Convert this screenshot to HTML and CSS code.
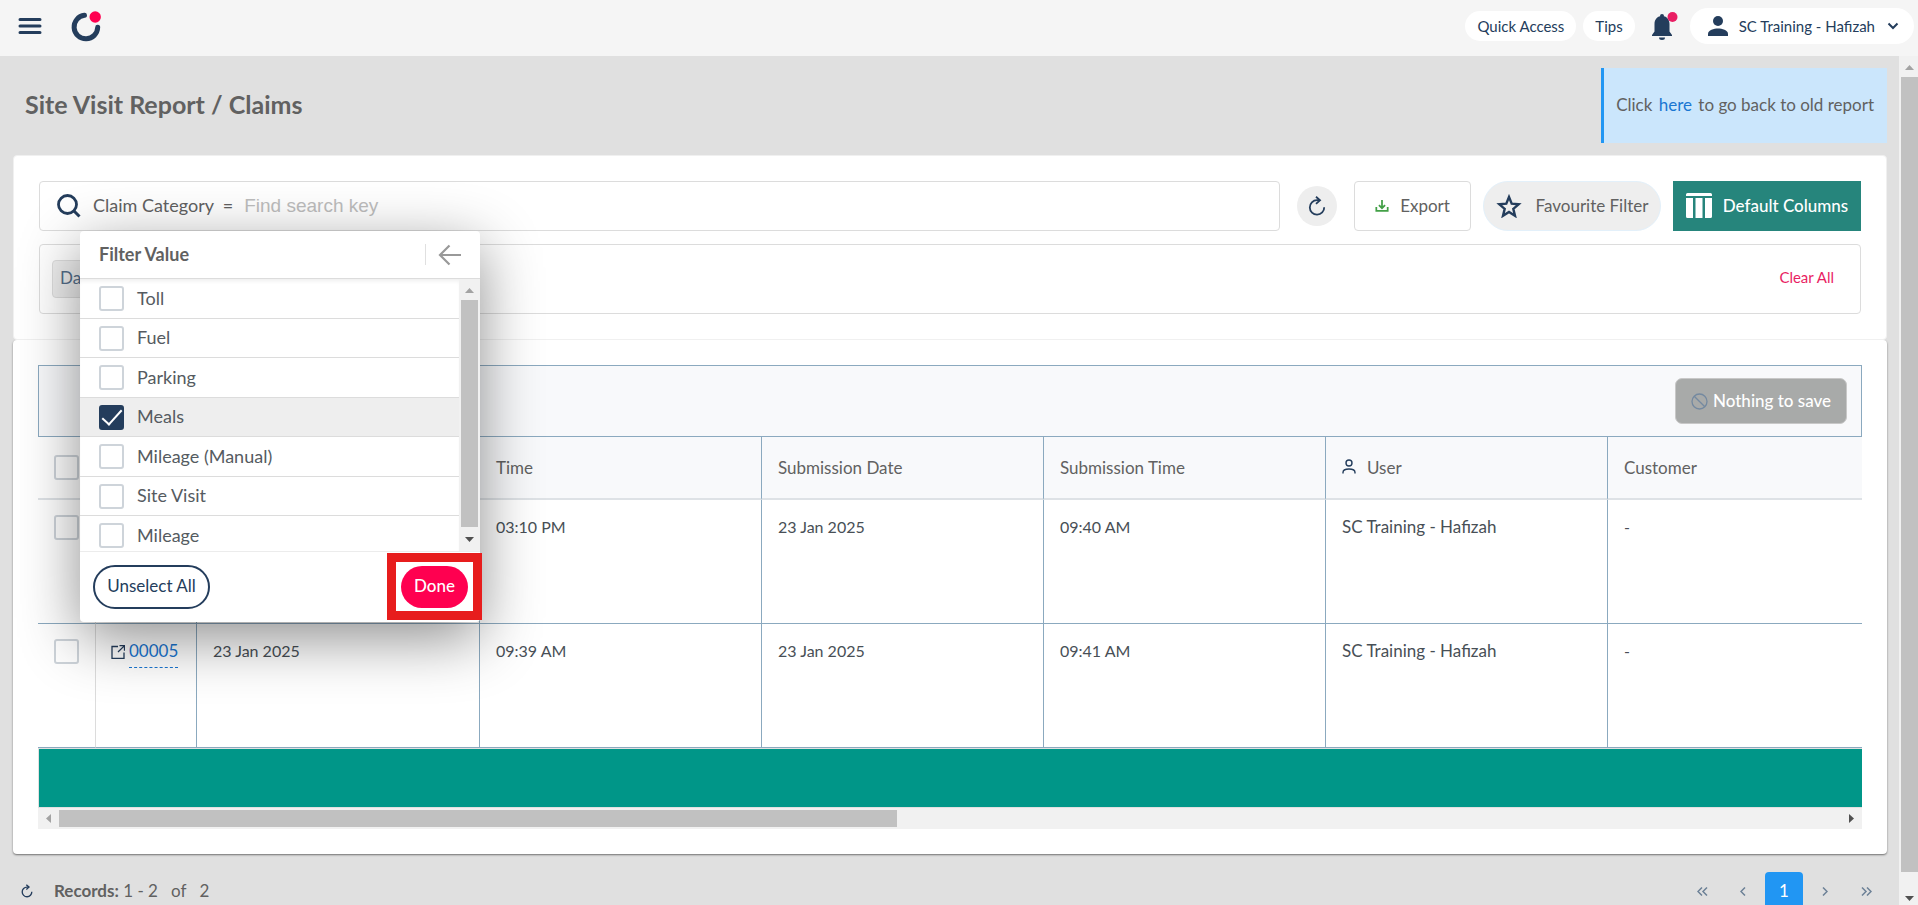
FILE: index.html
```html
<!DOCTYPE html>
<html lang="en">
<head>
<meta charset="utf-8">
<title>Site Visit Report / Claims</title>
<link rel="stylesheet" href="styles.css">
</head>
<body>
<header class="topbar">
  <button class="icon-btn" aria-label="Menu">
    <svg width="24" height="18" viewBox="0 0 24 18"><path d="M2 2.500h20M2 9h20M2 15.500h20" stroke="#243d5c" stroke-width="3" stroke-linecap="round"/></svg>
  </button>
  <a class="logo" href="#" aria-label="Home">
    <svg width="32" height="32" viewBox="0 0 32 32"><path d="M13.500 5.300A11.800 11.800 0 1 0 26.700 17.300" fill="none" stroke="#243d5c" stroke-width="5" stroke-linecap="round"/><circle cx="24.200" cy="7" r="5.700" fill="#ff0050"/></svg>
  </a>
  <nav class="topnav">
    <button class="pill">Quick Access</button>
    <button class="pill">Tips</button>
    <button class="icon-btn bell" aria-label="Notifications">
      <svg width="28" height="30" viewBox="0 0 28 30"><path d="M11 5c4.500 0 7.500 3.500 7.500 8v7.500L21 24v1H1v-1l2.500-3.500V13C3.500 8.500 6.500 5 11 5Z" fill="#243d5c"/><circle cx="11" cy="5" r="2" fill="#243d5c"/><path d="M8 26.500h6a3 2.500 0 0 1-6 0Z" fill="#243d5c"/><circle cx="21.500" cy="6" r="5" fill="#e91e63"/></svg>
    </button>
    <button class="pill user-pill">
      <svg width="22" height="22" viewBox="0 0 22 22" fill="#243d5c"><circle cx="11" cy="6" r="5"/><path d="M1 21v-2c0-4 6-5.500 10-5.500S21 15 21 19v2Z"/></svg>
      <span>SC Training - Hafizah</span>
      <svg class="caret" width="12" height="8" viewBox="0 0 12 8"><path d="M1.500 1.500 6 6l4.500-4.500" fill="none" stroke="#243d5c" stroke-width="2"/></svg>
    </button>
  </nav>
</header>

<div class="viewport">
  <main class="page">
    <div class="page-head">
      <h1>Site Visit Report / Claims</h1>
      <p class="note">Click <a href="#">here</a> to go back to old report</p>
    </div>

    <section class="card filters">
      <div class="filter-row">
        <div class="search">
          <svg width="24" height="24" viewBox="0 0 24 24"><circle cx="10.500" cy="10.500" r="9" fill="none" stroke="#243d5c" stroke-width="2.800"/><path d="m17 17 5.500 5.500" stroke="#243d5c" stroke-width="3"/></svg>
          <label for="search-key">Claim Category&nbsp; =</label>
          <input id="search-key" type="text" placeholder="Find search key">
        </div>
        <button class="round" aria-label="Refresh">
          <svg width="18" height="20" viewBox="0 0 18 20" fill="none" stroke="#243d5c" stroke-width="1.800"><path d="M11.500 4.200H9a7.200 7.200 0 1 0 7.200 7"/><path d="m8 .8 4 3.400-4 3.600"/></svg>
        </button>
        <button class="export">
          <svg width="14" height="14" viewBox="0 0 16 16" fill="none" stroke="#43a047" stroke-width="2"><path d="M8 1v9M4.500 7 8 10.500 11.500 7M1.500 9v4.500h13V9"/></svg>
          Export
        </button>
        <button class="favourite">
          <svg width="26" height="24" viewBox="0 0 26 24"><path d="m13 3 2.700 6.700 7 .6-5.400 4.600 1.700 6.900-6-3.800-6 3.800 1.700-6.900L3.300 10.300l7-.6Z" fill="none" stroke="#243d5c" stroke-width="2.400"/></svg>
          Favourite Filter
        </button>
        <button class="columns">
          <svg width="26" height="26" viewBox="0 0 26 26" fill="#fff"><path d="M0 1.500Q0 0 1.500 0h23Q26 0 26 1.500V3H0ZM0 5h7v20H1.500Q0 25 0 23.500ZM9.500 5h7v20h-7ZM19 5h7v18.500q0 1.500-1.500 1.500H19Z"/></svg>
          Default Columns
        </button>
      </div>
      <div class="chips">
        <span class="chip">Date</span>
        <button class="clear">Clear All</button>
      </div>

      <div class="popup">
        <div class="popup-head">
          <h2>Filter Value</h2>
          <button class="back" aria-label="Back">
            <svg width="24" height="22" viewBox="0 0 24 22" fill="none" stroke="#999" stroke-width="2.200"><path d="M23 11H2M11.500 1.500 2 11l9.500 9.500"/></svg>
          </button>
        </div>
        <div class="popup-body">
          <div class="options">
            <label><input type="checkbox"><span>Toll</span></label>
            <label><input type="checkbox"><span>Fuel</span></label>
            <label><input type="checkbox"><span>Parking</span></label>
            <label class="selected"><input type="checkbox" checked><span>Meals</span></label>
            <label><input type="checkbox"><span>Mileage (Manual)</span></label>
            <label><input type="checkbox"><span>Site Visit</span></label>
            <label><input type="checkbox"><span>Mileage</span></label>
          </div>
          <div class="vbar">
            <svg width="9" height="5" viewBox="0 0 9 5"><path d="M0 5 4.500 0 9 5Z" fill="#a3a3a3"/></svg>
            <div class="thumb"></div>
            <svg width="9" height="5" viewBox="0 0 9 5"><path d="M0 0 4.500 5 9 0Z" fill="#505050"/></svg>
          </div>
        </div>
        <div class="popup-foot">
          <button class="unselect">Unselect All</button>
          <div class="highlight"><button class="done">Done</button></div>
        </div>
      </div>
    </section>

    <section class="card report">
      <div class="toolbar">
        <button class="save" disabled>
          <svg width="17" height="17" viewBox="0 0 17 17" fill="none" stroke="#7489a0" stroke-width="1.300"><circle cx="8.500" cy="8.500" r="7.500"/><path d="m3.200 3.200 10.600 10.600"/></svg>
          Nothing to save
        </button>
      </div>
      <table>
        <colgroup><col class="c-check"><col class="c-id"><col class="c-date"><col class="c-data"><col class="c-data"><col class="c-data"><col class="c-data"><col></colgroup>
        <thead>
          <tr>
            <th><input type="checkbox" aria-label="Select all"></th><th></th><th></th>
            <th>Time</th><th>Submission Date</th><th>Submission Time</th>
            <th><svg class="person" width="14" height="15" viewBox="0 0 14 15" fill="none" stroke="#243d5c" stroke-width="1.400"><circle cx="7" cy="4" r="3"/><path d="M1 14.500v-1C1 11 3.500 10 7 10s6 1 6 3.500v1"/></svg>User</th>
            <th>Customer</th>
          </tr>
        </thead>
        <tbody>
          <tr>
            <td><input type="checkbox" aria-label="Select row"></td><td></td><td></td>
            <td>03:10 PM</td><td>23 Jan 2025</td><td>09:40 AM</td><td class="user">SC Training - Hafizah</td><td>-</td>
          </tr>
          <tr>
            <td><input type="checkbox" aria-label="Select row"></td>
            <td><svg class="ext" width="14" height="14" viewBox="0 0 14 14" fill="none" stroke="#243d5c" stroke-width="1.300"><path d="M7 1.500H1v12h12v-6M8.500.700h5v5M13.300.900 7 7"/></svg><a href="#">00005</a></td>
            <td>23 Jan 2025</td>
            <td>09:39 AM</td><td>23 Jan 2025</td><td>09:41 AM</td><td class="user">SC Training - Hafizah</td><td>-</td>
          </tr>
        </tbody>
      </table>
      <div class="totals"></div>
      <div class="hbar">
        <svg width="5" height="9" viewBox="0 0 5 9"><path d="M5 0 0 4.500 5 9Z" fill="#a3a3a3"/></svg>
        <div class="track"><div class="thumb"></div></div>
        <svg width="5" height="9" viewBox="0 0 5 9"><path d="M0 0 5 4.500 0 9Z" fill="#505050"/></svg>
      </div>
    </section>

    <footer class="pager">
      <button class="icon-btn" aria-label="Reload records">
        <svg width="12" height="14" viewBox="0 0 18 20" fill="none" stroke="#243d5c" stroke-width="2"><path d="M11.500 4.200H9a7.200 7.200 0 1 0 7.200 7"/><path d="m8 .8 4 3.400-4 3.600"/></svg>
      </button>
      <p class="records"><b>Records:</b> <span>1 - 2</span><span>of</span><span>2</span></p>
      <nav class="pages">
        <button aria-label="First page"><svg width="11" height="9" viewBox="0 0 11 9"><path d="M5 .5 1 4.500l4 4M10 .5 6 4.500l4 4"/></svg></button>
        <button aria-label="Previous page"><svg width="6" height="9" viewBox="0 0 6 9"><path d="M5 .5 1 4.500l4 4"/></svg></button>
        <button class="current">1</button>
        <button aria-label="Next page"><svg width="6" height="9" viewBox="0 0 6 9"><path d="m1 .5 4 4-4 4"/></svg></button>
        <button aria-label="Last page"><svg width="11" height="9" viewBox="0 0 11 9"><path d="m1 .5 4 4-4 4M6 .5l4 4-4 4"/></svg></button>
      </nav>
    </footer>
  </main>
  <div class="vbar page-bar">
    <svg width="9" height="5" viewBox="0 0 9 5"><path d="M0 5 4.500 0 9 5Z" fill="#a3a3a3"/></svg>
    <div class="thumb"></div>
    <svg width="9" height="5" viewBox="0 0 9 5"><path d="M0 0 4.500 5 9 0Z" fill="#505050"/></svg>
  </div>
</div>
</body>
</html>
```
FILE: styles.css
```css
* { box-sizing: border-box; }

body {
  margin: 0;
  height: 100vh;
  display: flex;
  flex-direction: column;
  overflow: hidden;
  background: #e0e0e0;
  color: #616161;
  font: 17px/24px Lato, "Noto Sans", sans-serif;
}

button { font: inherit; color: inherit; border: 0; background: none; padding: 0; cursor: pointer; white-space: nowrap; }
svg { flex: none; display: block; }
h1, h2, p { margin: 0; }

/* Top bar */
.topbar { flex: none; height: 56px; padding: 0 4px 4px 18px; display: flex; align-items: center; background: #f5f5f5; }
.logo { margin-left: 29px; }
.topnav { margin-left: auto; display: flex; align-items: center; gap: 7px; font-size: 15px; color: #243d5c; }
.pill { height: 30px; padding: 0 12px; border-radius: 18px; background: #fff; }
.bell { margin: 0 4px 0 9px; }
.user-pill { height: 36px; padding: 0 15px 0 17px; display: flex; align-items: center; }
.user-pill span { margin: 0 12px 0 10px; }

.viewport { flex: 1; min-height: 0; display: flex; }
.page { flex: 1; min-width: 0; padding: 12px 12px 0 13px; overflow: hidden; }

.page-head { height: 87px; padding-left: 12px; display: flex; justify-content: space-between; align-items: flex-start; }
h1 { font-size: 25px; line-height: 72px; font-weight: 700; }
.note { height: 75px; padding: 0 13px 0 12px; border-left: 3px solid #2196f3; background: #cbe6fc; line-height: 73px; }
.note a { margin: 0 2px; color: #1976d2; text-decoration: none; }

/* Filters */
.card { background: #fff; border-radius: 4px; }
.filters { position: relative; border: 1px solid #f0f0f0; padding: 25px; }
.filter-row { display: flex; align-items: center; height: 50px; }
.search { flex: 1; height: 50px; padding-left: 17px; display: flex; align-items: center; border: 1px solid #dcdcdc; border-radius: 4px; }
.search label { margin: 0 11px 0 12px; padding-bottom: 2px; white-space: nowrap; font-size: 18px; }
.search input { flex: 1; min-width: 0; border: 0; outline: 0; padding: 0; background: none; font: 19px "Liberation Sans", Arial, sans-serif; }
.search input::placeholder { color: #bdbdbd; }
.round { width: 40px; height: 40px; margin: 0 17px; border-radius: 20px; background: #eee; display: grid; place-items: center; }
.export, .favourite, .columns, .save { display: flex; align-items: center; justify-content: center; }
.export { width: 117px; height: 50px; gap: 11px; border: 1px solid #dcdcdc; border-radius: 4px; }
.favourite { width: 178px; height: 50px; margin: 0 12px; gap: 14px; border: 1px solid #e3f0fa; border-radius: 25px; background: #eee; }
.columns { width: 188px; height: 50px; gap: 11px; background: #26857c; color: #fff; font-weight: 500; }

.chips { height: 70px; margin-top: 13px; padding: 0 26px 0 12px; display: flex; align-items: center; justify-content: space-between; border: 1px solid #dcdcdc; border-radius: 4px; }
.chip { height: 38px; padding: 0 7px; border: 1px solid #ddd; border-radius: 4px; background: #eee; line-height: 34px; color: #546e8a; }
.clear { padding-bottom: 4px; color: #e91e63; font-size: 15px; }

/* Checkboxes */
input[type="checkbox"] { appearance: none; display: block; flex: none; width: 25px; height: 25px; margin: 0; border: 2px solid #ced4da; border-radius: 3px; background: none; }
input[type="checkbox"]:checked { border-color: #243d5c; background: #243d5c; display: grid; place-items: center; }
input[type="checkbox"]:checked::before { content: ""; width: 18px; height: 8px; margin-bottom: 5px; border: solid #fff; border-width: 0 0 2px 2px; transform: rotate(-48deg); }

/* Filter value popup */
.popup { position: absolute; z-index: 2; top: 75px; left: 66px; width: 400px; background: #fff; border-radius: 4px; box-shadow: 0 16px 60px rgba(0, 0, 0, .45); }
.popup-head { height: 48px; padding: 0 18px 0 19px; display: flex; align-items: center; justify-content: space-between; border-bottom: 1px solid #dcdcdc; }
h2 { padding-bottom: 2px; font-size: 18px; line-height: 44px; font-weight: 700; }
.back { height: 21px; padding-left: 12px; border-left: 1px solid #e0e0e0; display: flex; align-items: center; }
.popup-body { height: 272px; display: flex; overflow: hidden; }
.options { flex: 1; box-shadow: inset 0 4px 4px -2px #eee; }
.options label { height: 40px; padding: 0 19px; display: flex; align-items: center; gap: 13px; border-bottom: 1px solid #dcdcdc; color: #555b61; font-size: 18px; }
.options label:nth-child(even) { height: 39px; }
.options span { padding-bottom: 2px; }
.options .selected { background: #eee; }
.popup-foot { height: 71px; padding: 0 13px; display: flex; align-items: center; justify-content: space-between; border-top: 1px solid #ececec; }
.unselect { width: 117px; height: 44px; padding-bottom: 2px; border: 2px solid #243d5c; border-radius: 22px; color: #243d5c; }
.highlight { margin: -2px -15px 0 0; padding: 4px 5px 3px; border: 9px solid #e71d1d; }
.done { width: 67px; height: 42px; padding-bottom: 2px; border-radius: 21px; background: #ff0050; color: #fff; font-weight: 500; display: block; }

/* Scrollbars */
.vbar { width: 21px; padding: 9px 2px; display: flex; flex-direction: column; align-items: center; gap: 7px; background: #f1f1f1; }
.vbar .thumb { flex: 1; width: 17px; background: #c1c1c1; }
.popup .thumb { margin-bottom: 3px; }
.page-bar { width: 19px; padding: 9px 0 4px 2px; gap: 7px; }
.page-bar .thumb { margin-bottom: 17px; }
.hbar { height: 21px; padding: 0 8px; display: flex; align-items: center; gap: 8px; background: #f1f1f1; }
.hbar .track { flex: 1; height: 17px; }
.hbar .thumb { width: 47%; height: 17px; background: #c1c1c1; }

/* Report */
.report { padding: 25px; box-shadow: 0 1px 2px rgba(0, 0, 0, .5); }
.toolbar { height: 72px; padding: 0 14px 0 0; display: flex; align-items: center; justify-content: flex-end; border: 1px solid #8ba9bf; background: #f8f9fb; }
.save { width: 172px; height: 46px; gap: 5px; border: 1px solid #c8c8c8; border-radius: 7px; background: #a8aaa9; color: #fff; font-weight: 500; }

table { width: 100%; table-layout: fixed; border-collapse: separate; border-spacing: 0; }
.c-check { width: 58px; }
.c-id { width: 101px; }
.c-date { width: 283px; }
.c-data { width: 282px; }
th { height: 63px; padding: 0 16px; text-align: left; font-weight: 400; background: #f8f9fb; border-right: 1px solid #8ba9bf; border-bottom: 2px solid #dee2e6; }
td { height: 124px; padding: 15px 16px; vertical-align: top; color: #484f56; border-right: 1px solid #8ba9bf; border-bottom: 1px solid #8ba9bf; font-size: 16px; }
th:first-child { background: #fff; }
th:first-child, td:first-child { border-right-color: #dcdcdc; }
th:last-child, td:last-child { border-right: 0; }
.user, td a { font-size: 17px; }
.person { display: inline-block; margin-right: 11px; }
.ext { display: inline-block; margin: 0 4px 0 -1px; vertical-align: -2px; }
td a { display: inline-block; height: 29px; color: #1976d2; text-decoration: none; border-bottom: 1px dashed #1976d2; }
.totals { height: 60px; border: solid #e0e0e0; border-width: 1px 0 1px 1px; background: #009688; }

/* Pager */
.pager { padding: 18px 2px 0 8px; display: flex; align-items: center; }
.records { margin-left: 21px; }
.records span { margin-right: 13px; }
.pages { margin-left: auto; display: flex; gap: 3px; }
.pages button { width: 38px; height: 38px; border-radius: 4px; display: grid; place-items: center; }
.pages svg { fill: none; stroke: #6c8096; stroke-width: 1.5; }
.pages .current { background: #2196f3; color: #fff; }
```
